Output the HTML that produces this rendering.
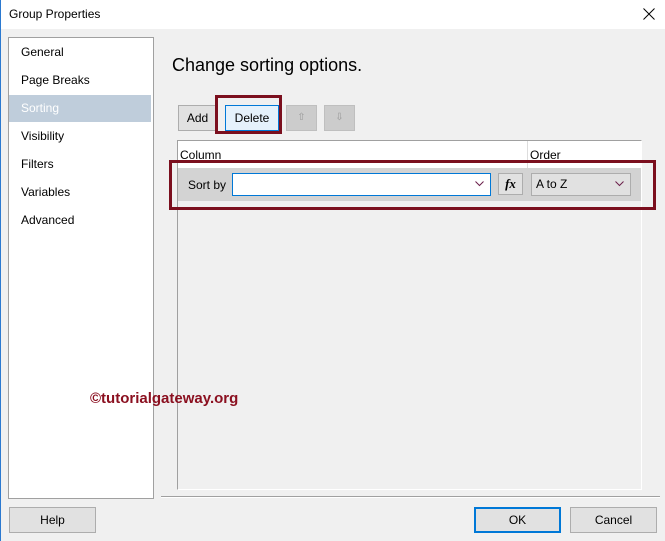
<!DOCTYPE html>
<html><head><style>
body{margin:0;width:665px;height:541px;background:#f0f0f0;position:relative;overflow:hidden;font-family:"Segoe UI","Liberation Sans",sans-serif;font-size:12px;color:#000}
.a{position:absolute}
.btn{position:absolute;background:#e1e1e1;border:1px solid #adadad;box-sizing:border-box;text-align:center;font-size:12px}
.nav div{position:absolute;left:0;width:142px;height:27px;line-height:27px;padding-left:12px;box-sizing:border-box}
.chev{position:absolute;right:6px;top:7px}
</style></head><body>
<div class="a" style="left:0;top:0;width:665px;height:29px;background:#fff"></div>
<div class="a" style="left:0;top:0;width:1px;height:541px;background:#2b79d0"></div>
<div class="a" style="left:9px;top:7px;font-size:12px">Group Properties</div>
<svg class="a" style="left:643px;top:8px" width="12" height="12"><path d="M0.5 0.5L11.5 11.5M11.5 0.5L0.5 11.5" stroke="#000" stroke-width="1"/></svg>

<div class="a nav" style="left:8px;top:37px;width:144px;height:460px;background:#fff;border:1px solid #a0a0a0">
<div style="top:1px">General</div>
<div style="top:29px">Page Breaks</div>
<div style="top:57px;background:#bfcddb;color:#fff">Sorting</div>
<div style="top:85px">Visibility</div>
<div style="top:113px">Filters</div>
<div style="top:141px">Variables</div>
<div style="top:169px">Advanced</div>
</div>

<div class="a" style="left:172px;top:55px;font-size:18px">Change sorting options.</div>

<div class="btn" style="left:178px;top:105px;width:39px;height:26px;line-height:24px">Add</div>
<div class="btn" style="left:225px;top:105px;width:54px;height:26px;line-height:24px;background:#e5f1fb;border-color:#0078d7">Delete</div>
<div class="a" style="left:215px;top:95px;width:67px;height:39px;border:3px solid #7b0f1e;box-sizing:border-box"></div>
<div class="btn" style="left:286px;top:105px;width:31px;height:26px;background:#ccc;border-color:#bfbfbf;color:#999;line-height:24px;font-size:10px">⇧</div>
<div class="btn" style="left:324px;top:105px;width:31px;height:26px;background:#ccc;border-color:#bfbfbf;color:#999;line-height:24px;font-size:10px">⇩</div>

<div class="a" style="left:177px;top:140px;width:465px;height:350px;border-left:1px solid #a0a0a0;border-top:1px solid #a0a0a0;border-right:1px solid #fff;border-bottom:1px solid #fff;box-sizing:border-box"></div>
<div class="a" style="left:178px;top:141px;width:463px;height:27px;background:#fff"></div>
<div class="a" style="left:527px;top:141px;width:1px;height:27px;background:#ddd"></div>
<div class="a" style="left:180px;top:148px">Column</div>
<div class="a" style="left:530px;top:148px">Order</div>
<div class="a" style="left:178px;top:168px;width:463px;height:33px;background:#d3d3d3"></div>
<div class="a" style="left:188px;top:178px">Sort by</div>
<div class="a" style="left:232px;top:173px;width:259px;height:23px;background:#fff;border:1px solid #0078d7;box-sizing:border-box"><svg class="chev" width="9" height="6"><path d="M0.5 0.5L4.5 4.5L8.5 0.5" fill="none" stroke="#6b1f4a"/></svg></div>
<div class="btn" style="left:498px;top:173px;width:25px;height:22px;line-height:20px;font-family:'Liberation Serif',serif;font-style:italic;font-weight:bold;font-size:13px">fx</div>
<div class="btn" style="left:531px;top:173px;width:100px;height:23px;line-height:21px;text-align:left;padding-left:4px;background:#e1e1e1">A to Z<svg class="chev" width="9" height="6"><path d="M0.5 0.5L4.5 4.5L8.5 0.5" fill="none" stroke="#6b1f4a"/></svg></div>
<div class="a" style="left:169px;top:160px;width:487px;height:50px;border:3px solid #7b0f1e;box-sizing:border-box"></div>

<div class="a" style="left:90px;top:390px;font-family:'Liberation Sans',sans-serif;font-weight:bold;font-size:15px;color:#8b1020">©tutorialgateway.org</div>

<div class="a" style="left:161px;top:496px;width:499px;height:1px;background:#a0a0a0"></div>
<div class="a" style="left:161px;top:497px;width:499px;height:1px;background:#fff"></div>
<div class="btn" style="left:9px;top:507px;width:87px;height:26px;line-height:24px">Help</div>
<div class="btn" style="left:474px;top:507px;width:87px;height:26px;line-height:22px;border:2px solid #0078d7">OK</div>
<div class="btn" style="left:570px;top:507px;width:87px;height:26px;line-height:24px">Cancel</div>
</body></html>
